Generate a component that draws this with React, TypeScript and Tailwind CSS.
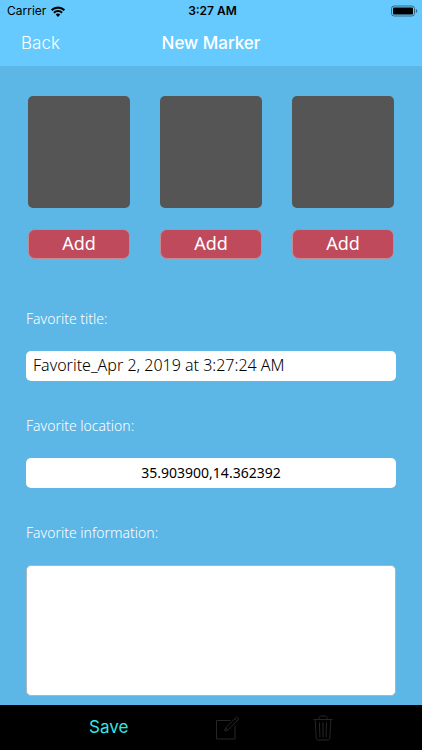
import React, { useState } from 'react';

const PHOTO_SLOTS = [1, 2, 3];

const WifiIcon = () => (
  <svg className="w-[14px] h-[11px]" viewBox="0 0 14 11" fill="none" stroke="#000" aria-hidden="true">
    <path d="M0.6 4.2a9 9 0 0 1 12.8 0" strokeWidth="2.2" />
    <path d="M2.9 6.8a5.8 5.8 0 0 1 8.2 0" strokeWidth="2" />
    <path d="M7 11 4.700 8.600a3.200 3.200 0 0 1 4.600 0Z" fill="#000" stroke="none" />
  </svg>
);

const BatteryIcon = () => (
  <svg className="w-[27px] h-3" viewBox="0 0 27 12" aria-hidden="true">
    <rect x="0.5" y="1" width="23" height="10" rx="2.6" fill="none" stroke="#36687f" />
    <rect x="2" y="2.500" width="20" height="7" rx="1" fill="#000" />
    <path d="M24.8 4v4c.9-.3 1.4-1.1 1.4-2s-.5-1.700-1.400-2Z" fill="#36687f" />
  </svg>
);

const ComposeIcon = () => (
  <svg className="w-6 h-6" viewBox="0 0 24 24" fill="none" stroke="#262626" aria-hidden="true">
    <path d="M14.5 4.5H0.5v18.5h18.5V9.5" />
    <path d="M8.7 15l.9-3.2L20.7 0.8l2.2 2.2L11.8 14Z" />
    <path d="M9.6 11.8l2.2 2.2M19 2.5l2.2 2.2" />
  </svg>
);

const TrashIcon = () => (
  <svg className="w-5 h-[26px]" viewBox="0 0 20 26" fill="none" stroke="#262626" aria-hidden="true">
    <path d="M0.5 4.5h19" />
    <path d="M6 4.3V2.500c0-.9.600-1.500 1.500-1.500h5c.9 0 1.500.600 1.500 1.500v1.800" />
    <path d="M2.2 4.8l1 18.700c.1.900.700 1.500 1.600 1.500h10.400c.9 0 1.500-.600 1.600-1.500l1-18.700" />
    <path d="M6.4 7.5l.5 14.8M10 7.5v14.8M13.6 7.5l-.5 14.8" />
  </svg>
);

const labelClass = 'block text-[14px] leading-5 font-light text-white mb-[22px]';

const App: React.FC = () => {
  const [title, setTitle] = useState('Favorite_Apr 2, 2019 at 3:27:24 AM');
  const [location, setLocation] = useState('35.903900,14.362392');
  const [info, setInfo] = useState('');

  return (
    <div className="min-h-screen flex flex-col bg-[#5cb6e6] font-['Noto_Sans',sans-serif]">
      <header className="bg-[#66caff] font-['Inter',sans-serif]">
        {/* Status bar */}
        <div className="h-[22px] pl-[7px] pr-1 grid grid-cols-[1fr_auto_1fr] items-center text-[12px] text-black">
          <div className="flex items-center gap-[5px]">
            <span>Carrier</span>
            <WifiIcon />
          </div>
          <span className="font-semibold">3:27 AM</span>
          <div className="flex justify-end">
            <BatteryIcon />
          </div>
        </div>

        {/* Navigation bar */}
        <nav className="h-11 px-[21px] grid grid-cols-[1fr_auto_1fr] items-center text-[17px] text-white">
          <button type="button" className="justify-self-start font-light">Back</button>
          <h1 className="font-medium">New Marker</h1>
        </nav>
      </header>

      <main className="flex-1 flex flex-col pt-[30px] px-[26px] pb-[9px]">
        <div className="grid grid-cols-3 gap-[30px] px-[2px] mb-[50px]">
          {PHOTO_SLOTS.map(slot => (
            <div key={slot} className="flex flex-col gap-[21px]">
              <div className="h-28 rounded-[5px] bg-[#555555]" />
              <button
                type="button"
                className="h-[30px] pb-[2px] flex items-center justify-center rounded-[7px] border border-[#c48a94] bg-[#be4a5b] text-[18px] text-white"
              >
                Add
              </button>
            </div>
          ))}
        </div>

        <div className="mb-[35px]">
          <label htmlFor="title" className={labelClass}>Favorite title:</label>
          <input
            id="title"
            type="text"
            className="block w-full h-[30px] px-[7px] pb-[2px] rounded-[5px] bg-white text-[16px] font-light text-black outline-none"
            value={title}
            onChange={(e) => setTitle(e.target.value)}
          />
        </div>

        <div className="mb-[35px]">
          <label htmlFor="location" className={labelClass}>Favorite location:</label>
          <input
            id="location"
            type="text"
            className="block w-full h-[30px] px-[7px] pb-[2px] rounded-[5px] bg-white text-[14px] text-center text-black outline-none"
            value={location}
            onChange={(e) => setLocation(e.target.value)}
          />
        </div>

        <div className="flex-1 flex flex-col">
          <label htmlFor="info" className={labelClass}>Favorite information:</label>
          <textarea
            id="info"
            className="flex-1 w-full min-h-24 p-[7px] rounded-[5px] border border-[#a9b8c0] bg-white text-[14px] text-black outline-none resize-none"
            value={info}
            onChange={(e) => setInfo(e.target.value)}
          />
        </div>
      </main>

      <footer className="h-[45px] px-[89px] flex items-center justify-between bg-black font-['Inter',sans-serif]">
        <button type="button" className="text-[17px] text-[#33e6e6]">Save</button>
        <button type="button" aria-label="Edit" className="pl-[14px]">
          <ComposeIcon />
        </button>
        <button type="button" aria-label="Delete">
          <TrashIcon />
        </button>
      </footer>
    </div>
  );
};

export default App;
